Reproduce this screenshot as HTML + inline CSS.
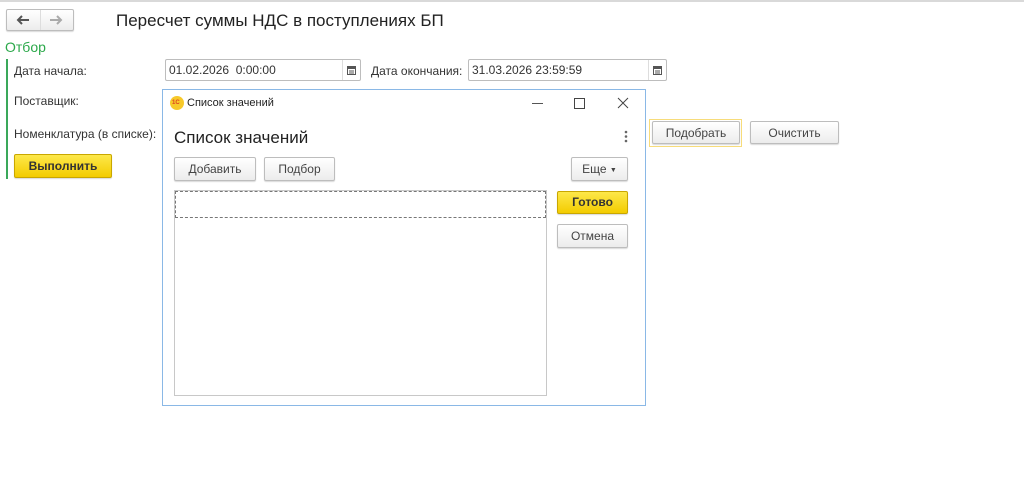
<!DOCTYPE html>
<html><head><meta charset="utf-8"><style>
*{box-sizing:border-box;margin:0;padding:0}
body{width:1024px;height:489px;background:#fff;font-family:"Liberation Sans","DejaVu Sans",sans-serif;color:#333;position:relative;overflow:hidden;font-size:12px}
.a{position:absolute}
.btn{position:absolute;border:1px solid #bdbdbd;border-radius:2px;background:linear-gradient(#fff,#ececec);box-shadow:0 1px 1px rgba(0,0,0,.15);text-align:center;color:#444;font-size:12px}
.inp{position:absolute;border:1px solid #bdbdbd;border-radius:2px;background:#fff;font-size:12px;color:#333;padding-left:3px}
.cal{position:absolute;right:0;top:0;bottom:0;width:18px;border-left:1px solid #ddd;display:flex;align-items:center;justify-content:center}
.yel{background:linear-gradient(#fde84a,#f3cc00);border-color:#c9a700;font-weight:bold;color:#333}
</style></head><body>
<div class="a" style="left:0;top:0;width:1024px;height:2px;background:#d9d9d9"></div>
<div class="btn" style="left:6px;top:9px;width:68px;height:22px;">
 <div class="a" style="left:33px;top:0;width:1px;height:20px;background:#ddd"></div>
 <svg class="a" style="left:9px;top:5px" width="14" height="10"><path d="M13 5H2M6 1L2 5l4 4" stroke="#555" stroke-width="2" fill="none"/></svg>
 <svg class="a" style="left:42px;top:5px" width="14" height="10"><path d="M1 5h11M8 1l4 4-4 4" stroke="#aaa" stroke-width="2" fill="none"/></svg>
</div>
<div class="a" style="left:116px;top:11px;font-size:17px;color:#222">Пересчет суммы НДС в поступлениях БП</div>
<div class="a" style="left:5px;top:39px;font-size:14px;color:#2ba84a">Отбор</div>
<div class="a" style="left:6px;top:59px;width:2px;height:120px;background:#3aa85a"></div>
<div class="a" style="left:14px;top:64px">Дата начала:</div>
<div class="a" style="left:14px;top:94px">Поставщик:</div>
<div class="a" style="left:14px;top:127px">Номенклатура (в списке):</div>
<div class="inp" style="left:165px;top:59px;width:196px;height:22px;line-height:20px">01.02.2026&nbsp; 0:00:00<div class="cal"><svg width="9" height="9"><rect x=".5" y="1.5" width="8" height="7" fill="none" stroke="#555"/><rect x="0" y="0" width="9" height="3" fill="#555"/><path d="M2 5h5M2 7h5" stroke="#555"/></svg></div></div>
<div class="a" style="left:371px;top:64px">Дата окончания:</div>
<div class="inp" style="left:468px;top:59px;width:199px;height:22px;line-height:20px">31.03.2026 23:59:59<div class="cal"><svg width="9" height="9"><rect x=".5" y="1.5" width="8" height="7" fill="none" stroke="#555"/><rect x="0" y="0" width="9" height="3" fill="#555"/><path d="M2 5h5M2 7h5" stroke="#555"/></svg></div></div>
<div class="btn yel" style="left:14px;top:154px;width:98px;height:24px;line-height:22px">Выполнить</div>
<div class="a" style="left:649px;top:119px;width:93px;height:28px;border:1px solid #f7dc7a"></div>
<div class="btn" style="left:652px;top:121px;width:88px;height:23px;line-height:22px">Подобрать</div>
<div class="btn" style="left:750px;top:121px;width:89px;height:23px;line-height:22px">Очистить</div>

<div class="a" style="left:162px;top:89px;width:484px;height:317px;border:1px solid #8ab8e6;background:#fff">
 <div class="a" style="left:7px;top:6px;width:14px;height:14px;border-radius:50%;background:#f7c92a"><div class="a" style="left:2px;top:4px;font-size:6px;color:#d42;font-weight:bold">1C</div></div>
 <div class="a" style="left:24px;top:7px;font-size:11px;color:#222">Список значений</div>
 <div class="a" style="left:369px;top:13px;width:11px;height:1px;background:#555"></div>
 <div class="a" style="left:411px;top:8px;width:11px;height:11px;border:1px solid #444"></div>
 <svg class="a" style="left:454px;top:7px" width="12" height="12"><path d="M1 1l10 10M11 1L1 11" stroke="#444"/></svg>
 <div class="a" style="left:11px;top:38px;font-size:17px;color:#222">Список значений</div>
 <svg class="a" style="left:461px;top:40px" width="4" height="13"><circle cx="2" cy="2" r="1.3" fill="#666"/><circle cx="2" cy="6.5" r="1.3" fill="#666"/><circle cx="2" cy="11" r="1.3" fill="#666"/></svg>
 <div class="btn" style="left:11px;top:67px;width:82px;height:24px;line-height:22px">Добавить</div>
 <div class="btn" style="left:101px;top:67px;width:71px;height:24px;line-height:22px">Подбор</div>
 <div class="btn" style="left:408px;top:67px;width:57px;height:24px;line-height:22px">Еще <span style="font-size:7px;vertical-align:1px">&#9660;</span></div>
 <div class="a" style="left:11px;top:100px;width:373px;height:206px;border:1px solid #c8c8c8">
  <div class="a" style="left:0;top:0;width:371px;height:27px;border:1px dashed #777"></div>
 </div>
 <div class="btn yel" style="left:394px;top:101px;width:71px;height:23px;line-height:21px">Готово</div>
 <div class="btn" style="left:394px;top:134px;width:71px;height:24px;line-height:22px">Отмена</div>
</div>
</body></html>
